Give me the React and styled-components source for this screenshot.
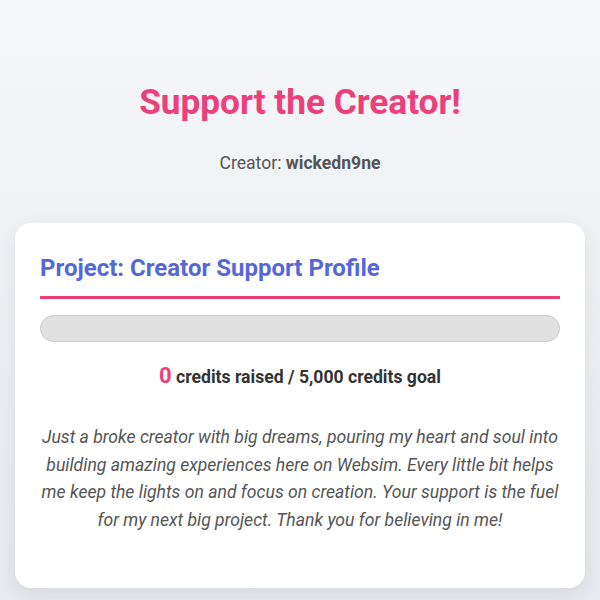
import styled, { createGlobalStyle } from 'styled-components';

const GlobalStyle = createGlobalStyle`
  * { box-sizing: border-box; }
  body {
    margin: 0;
    font-family: Roboto, "Liberation Sans", sans-serif;
    background: linear-gradient(180deg, #f5f7fa 0%, #e6e9ee 100%);
    min-height: 100vh;
  }
`;

const Page = styled.div`
  padding: 0 15px;
  display: flex;
  flex-direction: column;
  align-items: center;
`;

const Header = styled.header`
  padding-top: 81px;
  text-align: center;
`;

const Title = styled.h1`
  margin: 0;
  font-size: 35.2px;
  font-weight: 700;
  color: #ec3f7c;
`;

const Creator = styled.p`
  margin: 30px 0 0;
  font-size: 17.6px;
  color: #555;
  strong { font-weight: 700; }
`;

const Card = styled.section`
  width: 100%;
  margin-top: 50px;
  background: #fff;
  border-radius: 16px;
  box-shadow: 0 6px 20px rgba(0, 0, 0, 0.08);
  padding: 31px 25px 54px;
`;

const CardTitle = styled.h2`
  margin: 0;
  padding-bottom: 14px;
  border-bottom: 3px solid #ec3f7c;
  font-size: 24px;
  font-weight: 700;
  color: #5468d8;
`;

const ProgressTrack = styled.div`
  margin-top: 16px;
  height: 27px;
  border-radius: 14px;
  background: #e0e0e0;
  border: 1px solid #ccc;
  overflow: hidden;
`;

const ProgressFill = styled.div`
  height: 100%;
  background: #ec3f7c;
`;

const Stats = styled.p`
  margin: 21px 0 0;
  text-align: center;
  font-size: 17.6px;
  font-weight: 700;
  color: #333;
`;

const Raised = styled.span`
  font-size: 22px;
  color: #ec3f7c;
`;

const Description = styled.p`
  margin: 36px 0 0;
  text-align: center;
  font-size: 17.6px;
  font-style: italic;
  line-height: 1.57;
  color: #555;
`;

const raised = 0;
const goal = 5000;

export default function App() {
  return (
    <>
      <GlobalStyle />
      <Page>
        <Header>
          <Title>Support the Creator!</Title>
          <Creator>Creator: <strong>wickedn9ne</strong></Creator>
        </Header>
        <Card>
          <CardTitle>Project: Creator Support Profile</CardTitle>
          <ProgressTrack>
            <ProgressFill style={{ width: `${(raised / goal) * 100}%` }} />
          </ProgressTrack>
          <Stats>
            <Raised>{raised}</Raised> credits raised / {goal.toLocaleString('en-US')} credits goal
          </Stats>
          <Description>
            Just a broke creator with big dreams, pouring my heart and soul into building amazing experiences here on Websim. Every little bit helps me keep the lights on and focus on creation. Your support is the fuel for my next big project. Thank you for believing in me!
          </Description>
        </Card>
      </Page>
    </>
  );
}
